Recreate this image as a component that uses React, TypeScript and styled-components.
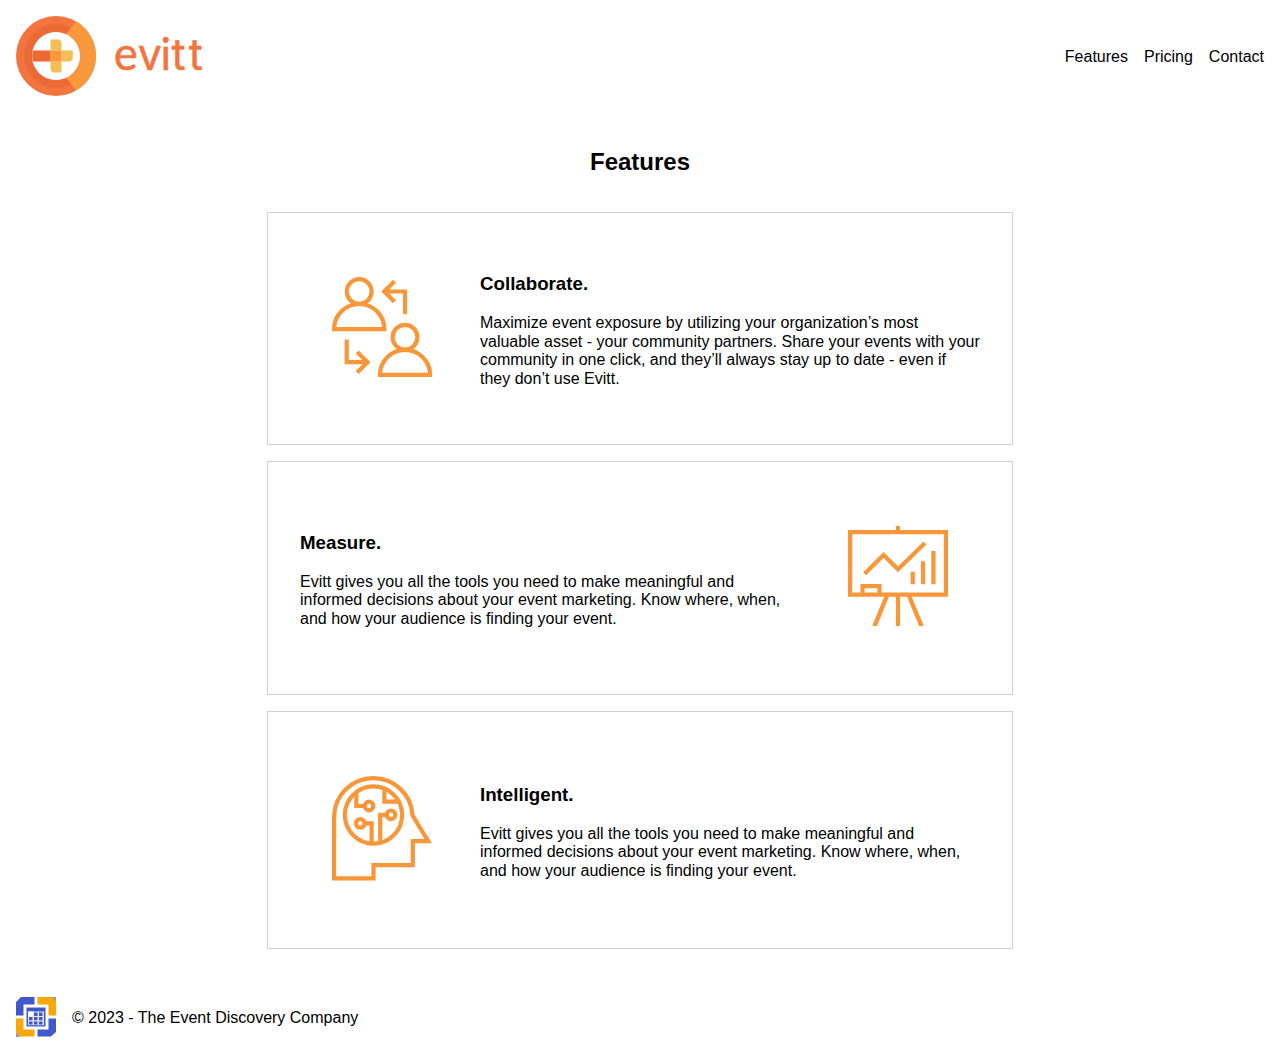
import React from 'react';
import styled, { createGlobalStyle } from 'styled-components';

const GlobalStyle = createGlobalStyle`
  *, *::before, *::after { box-sizing: border-box; }
  body {
    margin: 0;
    background: #fff;
    color: #000;
    font: 16px/18.5px "Liberation Sans", Arial, sans-serif;
  }
`;

const Header = styled.header`
  display: flex;
  align-items: center;
  justify-content: space-between;
  height: 112px;
  padding: 16px;
`;

const Brand = styled.a`
  display: flex;
  align-items: center;
`;

const Nav = styled.nav`
  display: flex;
  gap: 16px;
  padding-top: 2px;
`;

const NavLink = styled.a`
  color: #000;
  text-decoration: none;
`;

const Main = styled.main`
  display: flex;
  flex-direction: column;
  align-items: center;
  padding: 36px 16px 0;
`;

const Title = styled.h2`
  margin: 0;
  font-size: 24px;
  line-height: 28px;
`;

const FeatureList = styled.div`
  display: flex;
  flex-direction: column;
  gap: 16px;
  margin-top: 35.5px;
`;

const Card = styled.section<{ $reverse?: boolean; $height?: number }>`
  display: flex;
  flex-direction: ${(p) => (p.$reverse ? 'row-reverse' : 'row')};
  align-items: center;
  gap: 16px;
  width: 746px;
  height: ${(p) => p.$height ?? 233.5}px;
  padding: 32px;
  border: 1px solid #d0d0d0;
`;

const Figure = styled.div`
  display: flex;
  align-self: flex-start;
  margin: 32px;
`;

const Copy = styled.div<{ $offset?: number }>`
  width: 500px;
  flex: none;
  padding-top: ${(p) => p.$offset ?? 4.4}px;
`;

const CardTitle = styled.h3`
  margin: 0 0 19.7px;
  font-size: 18.72px;
  line-height: 21.5px;
`;

const Text = styled.p`
  margin: 0;
`;

const Footer = styled.footer`
  display: flex;
  align-items: center;
  gap: 16px;
  padding: 48px 16px 16px;
`;

const Copyright = styled.p`
  margin: 0;
  padding-top: 2px;
`;

const Stroked = styled.svg`
  display: block;
  overflow: visible;
  fill: none;
  stroke: #f8963a;
  stroke-width: 4.2;
`;

const Wordmark = styled.text`
  fill: #f4743f;
  stroke: #f4743f;
  stroke-width: 0.5;
  stroke-linejoin: round;
  font-family: Lato, sans-serif;
  font-size: 45.5px;
`;

const Grotesque = styled.tspan`
  font-family: Inter, sans-serif;
  font-size: 43px;
`;

const Logo = () => (
  <svg width="190" height="80" viewBox="16 16 190 80">
    <circle cx="56" cy="56" r="40" fill="#f4743f" />
    <circle cx="56" cy="56" r="32" fill="#ea6935" />
    <path d="M76.4 21.6A40 40 0 0 1 76.4 90.4L56 66V46Z" fill="#f8983a" />
    <circle cx="56" cy="56" r="24" fill="#fff" />
    <path d="M32.8 50.5H51V61.5H32.8Q31.6 56 32.8 50.5Z" fill="#ea6935" />
    <path d="M50.5 39.5H58Q61.5 39.5 61.5 43V50.5H72.8V57.5Q72.8 61.5 68.8 61.5H61.5V72.5H54.5Q50.5 72.5 50.5 68.5Z" fill="#f4be57" />
    <path d="M50.5 50.5H61.5V61.5H50.5Z" fill="#f8963a" />
    <path d="M50.5 50.5H72.5M50.5 61.3H69M61.3 50.5V61.5" stroke="#f8d38b" strokeWidth=".5" fill="none" />
    <Wordmark y="69.5">
      <tspan x="113.8">e</tspan>
      <Grotesque x="137.7">v</Grotesque>
      <tspan x="160.6" fontSize="44">i</tspan>
      <Grotesque x="171.4 188.8">tt</Grotesque>
    </Wordmark>
  </svg>
);

const CollaborateIcon = () => (
  <Stroked width="100" height="100" viewBox="0 0 100 100">
    <circle cx="27.2" cy="14.5" r="12.4" />
    <path d="M2.1 52.1A25.1 25.1 0 0 1 52.3 52.1Z" />
    <circle cx="73" cy="60.3" r="12.4" />
    <path d="M47.9 97.9A25.1 25.1 0 0 1 98.1 97.9Z" />
    <path d="M73 37.2V14.5H53M62.5 4.2L52.2 14.5L62.5 24.8" />
    <path d="M14.7 62.5V85.2H35M25.2 74.9L35.5 85.2L25.2 95.5" />
  </Stroked>
);

const MeasureIcon = () => (
  <Stroked width="100" height="100" viewBox="0 0 100 100">
    <path d="M2.1 6.2H97.9V68.6H2.1ZM50 0V6M14.5 68V60.2H31.5V68" />
    <path d="M16.7 47.8L35.6 28.9L50 43.3L77 16.9" />
    <path d="M64.7 58.3V45.8M75 58.3V35.2M85.4 58.3V25" />
    <path d="M50 68V100" />
    <path d="M36.6 70H41.2L29 100H24.8V98.2ZM63.4 70H58.8L71 100H75.2V98.2Z" fill="#f8963a" stroke="none" />
  </Stroked>
);

const IntelligentIcon = () => (
  <Stroked width="100" height="104.5" viewBox="0 0 100 104.5">
    <path d="M2.1 102.3V41.3A39.2 39.2 0 0 1 41.3 2.1A39.2 39.2 0 0 1 80.5 39.3L96.2 65.2H80.8V89.1H41.5V102.3Z" />
    <circle cx="41.5" cy="39" r="28.6" />
    <circle cx="37" cy="30" r="4.3" />
    <circle cx="59" cy="38.8" r="4.3" />
    <circle cx="28.3" cy="47.4" r="4.3" />
    <path d="M24.3 16V30H33M52.4 12.5V25.6H66M55 38.8H48.2V66M32.5 47.4H39.6V66" />
  </Stroked>
);

const CompanyIcon = () => (
  <svg width="40" height="40" viewBox="0 0 40 40">
    <path d="M35 0H40V5ZM0 35V40H5Z" fill="#9b9a9b" />
    <path d="M5 0H18.5V7.5H7.5V18.5H0V5Z" fill="#4159c8" />
    <path d="M21.5 0H35.5L40 4.5V18.5H32.5V7.5H21.5Z" fill="#f7a808" />
    <path d="M0 21.5H7.5V32.5H18.5V39.5H4.5L0 35.5Z" fill="#f7a808" />
    <path d="M32.5 21.5H40V35L35 39.5H21.5V32.5H32.5Z" fill="#4159c8" />
    <path d="M10.5 10.5H29.5V29.5H10.5Z" fill="#4159c8" />
    <path d="M12 14.5H28V28.2H12Z" fill="#dfe3f5" />
    <path d="M12 14.5H17.5V19.5H12Z" fill="#fff" />
    <path d="M18 15.5H21.5V19H18ZM23 15.5H26.5V19H23ZM13 20H16.5V23.3H13ZM18 20H21.5V23.3H18ZM23 20H26.5V23.3H23ZM13 24.5H16.5V27.5H13ZM18 24.5H21.5V27.5H18ZM23 24.5H26.5V27.5H23Z" fill="#4159c0" />
  </svg>
);

const tools =
  'Evitt gives you all the tools you need to make meaningful and informed decisions about your event marketing. Know where, when, and how your audience is finding your event.';

const features = [
  {
    title: 'Collaborate.',
    icon: <CollaborateIcon />,
    text: 'Maximize event exposure by utilizing your organization’s most valuable asset - your community partners. Share your events with your community in one click, and they’ll always stay up to date - even if they don’t use Evitt.',
    offset: 5,
  },
  { title: 'Measure.', icon: <MeasureIcon />, text: tools, reverse: true },
  { title: 'Intelligent.', icon: <IntelligentIcon />, text: tools, height: 238.5 },
];

export default function App() {
  return (
    <>
      <GlobalStyle />
      <Header>
        <Brand>
          <Logo />
        </Brand>
        <Nav>
          <NavLink>Features</NavLink>
          <NavLink>Pricing</NavLink>
          <NavLink>Contact</NavLink>
        </Nav>
      </Header>
      <Main>
        <Title>Features</Title>
        <FeatureList>
          {features.map((f) => (
            <Card key={f.title} $reverse={f.reverse} $height={f.height}>
              <Figure>{f.icon}</Figure>
              <Copy $offset={f.offset}>
                <CardTitle>{f.title}</CardTitle>
                <Text>{f.text}</Text>
              </Copy>
            </Card>
          ))}
        </FeatureList>
      </Main>
      <Footer>
        <CompanyIcon />
        <Copyright>© 2023 - The Event Discovery Company</Copyright>
      </Footer>
    </>
  );
}
